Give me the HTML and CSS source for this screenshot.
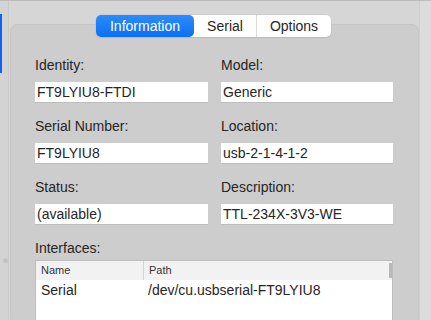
FILE: index.html
```html
<!DOCTYPE html>
<html lang="en">
    <head>
        <meta charset="UTF-8">
        <meta name="viewport" content="width=device-width, initial-scale=1.0">
        <title>Device Info</title>
        <link rel="stylesheet" href="styles.css">
    </head>
    <body>
        <div class="window">
            <div class="sidebar">
                <span class="marker"></span>
                <span class="dot"></span>
            </div>

            <div class="main">
                <div class="tabs">
                    <span class="tab active">Information</span>
                    <span class="tab">Serial</span>
                    <span class="tab">Options</span>
                </div>

                <div class="box">
                    <div class="grid">
                        <div class="field">
                            <label>Identity:</label>
                            <div class="input">FT9LYIU8-FTDI</div>
                        </div>
                        <div class="field">
                            <label>Model:</label>
                            <div class="input">Generic</div>
                        </div>
                        <div class="field">
                            <label>Serial Number:</label>
                            <div class="input">FT9LYIU8</div>
                        </div>
                        <div class="field">
                            <label>Location:</label>
                            <div class="input">usb-2-1-4-1-2</div>
                        </div>
                        <div class="field">
                            <label>Status:</label>
                            <div class="input">(available)</div>
                        </div>
                        <div class="field">
                            <label>Description:</label>
                            <div class="input">TTL-234X-3V3-WE</div>
                        </div>
                    </div>

                    <label class="table-label">Interfaces:</label>
                    <div class="table">
                        <div class="thead">
                            <span class="col-name">Name</span>
                            <span class="col-path">Path</span>
                            <span class="scroller"></span>
                        </div>
                        <div class="trow">
                            <span class="col-name">Serial</span>
                            <span class="col-path">/dev/cu.usbserial-FT9LYIU8</span>
                        </div>
                    </div>
                </div>
            </div>

            <div class="edge"></div>
        </div>
    </body>
</html>
```

FILE: styles.css
```css
* {
    box-sizing: border-box;
}

body {
    margin: 0;
    background-color: #d6d6d6;
    font-family: "Liberation Sans", Arial, sans-serif;
    font-size: 14px;
    color: #262626;
    overflow: hidden;
}

.window {
    display: flex;
    height: 320px;
    overflow: hidden;
    border-top: 1px solid #bcbcbc;
}

.sidebar {
    position: relative;
    width: 9px;
    background-color: #d3d3d3;
    border-right: 1px solid #cacaca;
}

.marker {
    position: absolute;
    left: 0;
    top: 13px;
    width: 2px;
    height: 59px;
    background-color: #1360f0;
}

.dot {
    position: absolute;
    left: 3px;
    top: 257px;
    width: 5px;
    height: 5px;
    border-radius: 50%;
    background-color: #c4c4c4;
}

.main {
    position: relative;
    width: 410px;
    padding-top: 23px;
    padding-left: 1px;
}

.edge {
    flex: 1;
    background-color: #dcdcdc;
    border-left: 1px solid #cfcfcf;
}

.tabs {
    position: absolute;
    top: 14px;
    left: 87px;
    display: flex;
    height: 22px;
    background-color: #fff;
    border-radius: 5px;
    box-shadow: 0 0 0 0.5px #c2c2c2, 0 1px 1px rgba(0, 0, 0, 0.12);
    z-index: 1;
}

.tab {
    display: flex;
    align-items: center;
    justify-content: center;
    line-height: 22px;
    border-left: 1px solid #dadada;
}

.tab:nth-child(2) {
    width: 62px;
    border-left: none;
}

.tab:nth-child(3) {
    width: 75px;
}

.tab.active {
    width: 98px;
    color: #fff;
    border-left: none;
    border-radius: 5px;
    background: linear-gradient(#2a8cfb, #0b70f2);
}

.box {
    height: 300px;
    background-color: #cdcdcd;
    border: 1px solid #c6c6c6;
    border-radius: 7px;
    padding: 32px 24px 0 24px;
}

.grid {
    display: grid;
    grid-template-columns: 173px 172px;
    column-gap: 13px;
    row-gap: 16px;
}

.field label,
.table-label {
    display: block;
    line-height: 16px;
}

.input {
    margin-top: 9px;
    height: 20px;
    line-height: 20px;
    padding: 0 2px;
    background-color: #fff;
    box-shadow: 0 1px 0 #bdbdbd;
}

.table-label {
    margin-top: 16px;
}

.table {
    margin-top: 4px;
    width: 358px;
    height: 80px;
    background-color: #fff;
    border: 1px solid #bebebe;
    border-bottom: none;
}

.thead,
.trow {
    position: relative;
    display: flex;
}

.thead {
    height: 19px;
    line-height: 19px;
    font-size: 11px;
    color: #333;
    background-color: #f2f2f2;
}

.thead .col-path {
    border-left: 1px solid #d4d4d4;
}

.trow {
    height: 20px;
    line-height: 20px;
}

.col-name {
    width: 107px;
    padding-left: 5px;
}

.col-path {
    padding-left: 5px;
}

.scroller {
    position: absolute;
    right: 0;
    top: 2px;
    width: 3px;
    height: 15px;
    background-color: #b9b9b9;
}
```
